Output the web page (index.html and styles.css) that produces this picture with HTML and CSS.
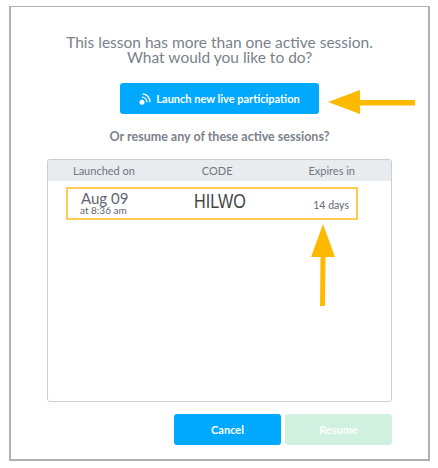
FILE: index.html
```html
<!DOCTYPE html>
<html lang="en">
<head>
    <meta charset="UTF-8">
    <title>Active sessions</title>
    <link rel="stylesheet" href="styles.css">
</head>
<body>
    <div class="dialog">
        <p class="intro">This lesson has more than one active session.<br>What would you like to do?</p>

        <button class="launch">
            <svg class="live-icon" viewBox="0 0 12 12" width="12" height="12">
                <circle cx="3" cy="9.200" r="2.500" fill="#fff"/>
                <path d="M3 4.200a5 5 0 0 1 5 5M3.600 .8a8 8 0 0 1 7.400 8.400" fill="none" stroke="#fff" stroke-width="1.300"/>
            </svg>
            Launch new live participation
        </button>

        <p class="resume-text">Or resume any of these active sessions?</p>

        <div class="sessions">
            <div class="sessions-head">
                <span>Launched on</span>
                <span class="code-head">CODE</span>
                <span>Expires in</span>
            </div>
            <div class="session-row">
                <div class="session-date">
                    <div class="day">Aug 09</div>
                    <div class="time">at 8:36 am</div>
                </div>
                <div class="session-code">HILWO</div>
                <div class="session-expires">14 days</div>
            </div>
        </div>

        <div class="actions">
            <button class="btn-cancel">Cancel</button>
            <button class="btn-resume">Resume</button>
        </div>

        <svg class="arrow arrow-left" viewBox="0 0 90 26" width="90" height="26">
            <path d="M1 12L33 0V10H88V15.500H33V24Z" fill="#ffb900"/>
        </svg>
        <svg class="arrow arrow-up" viewBox="0 0 26 84" width="26" height="84">
            <path d="M13 0L25 33H15.500L15 82H10L10.500 33H1Z" fill="#ffb900"/>
        </svg>
    </div>
</body>
</html>
```

FILE: styles.css
```css
body{
    margin: 0;
    background-color: #fff;
    font-family: "Lato", sans-serif;
}

.dialog{
    position: relative;
    box-sizing: border-box;
    width: 421px;
    height: 455px;
    margin: 6px 0 0 9px;
    padding: 28px 36px 0 36px;
    border: 1px solid #b0b0b0;
    border-width: 1px 2px 2px 2px;
    display: flex;
    flex-direction: column;
    align-items: center;
}

.intro{
    margin: 0;
    font-size: 15.500px;
    line-height: 15px;
    text-align: center;
    color: #7a818b;
    white-space: nowrap;
}

.launch{
    width: 199px;
    height: 31px;
    margin-top: 18px;
    border: none;
    border-radius: 3px;
    background-color: #00a9ff;
    color: #fff;
    font-family: inherit;
    font-size: 11px;
    font-weight: bold;
    display: flex;
    align-items: center;
    justify-content: center;
    gap: 5px;
}

.resume-text{
    margin: 15px 0 0 0;
    font-size: 12.500px;
    font-weight: bold;
    line-height: 16px;
    color: #7a818b;
}

.sessions{
    box-sizing: border-box;
    width: 345px;
    height: 243px;
    margin-top: 14px;
    border: 1px solid #c8ced4;
    border-radius: 3px;
}

.sessions-head{
    height: 21px;
    padding: 0 36px 0 25px;
    background-color: #e9ecef;
    display: flex;
    align-items: center;
    justify-content: space-between;
    font-size: 11px;
    color: #6f7680;
}

.code-head{
    margin-right: 9px;
}

.session-row{
    box-sizing: border-box;
    width: 292px;
    height: 33px;
    margin: 6px 0 0 18px;
    padding: 0 7px 0 12px;
    border: 2px solid #ffcb52;
    display: flex;
    align-items: center;
    color: #5f666f;
}

.session-date{
    width: 70px;
}

.day{
    font-size: 15px;
    line-height: 13px;
    margin-left: 1px;
}

.time{
    font-size: 10px;
    line-height: 10px;
}

.session-code{
    width: 80px;
    margin: -6px 0 0 44px;
    font-family: "Liberation Sans", sans-serif;
    font-size: 21px;
    color: #444;
    transform: scaleX(0.770);
    transform-origin: left center;
}

.session-expires{
    margin: 2px 0 0 auto;
    font-size: 10.500px;
}

.actions{
    align-self: flex-end;
    display: flex;
    gap: 4px;
    margin-top: 12px;
}

.actions button{
    width: 107px;
    height: 31px;
    border: none;
    border-radius: 3px;
    font-family: inherit;
    font-size: 11px;
    font-weight: bold;
    color: #fff;
}

.btn-cancel{
    background-color: #00a9ff;
}

.btn-resume{
    background-color: #d0f0e0;
}

.arrow{
    position: absolute;
}

.arrow-left{
    left: 316px;
    top: 83px;
}

.arrow-up{
    left: 299px;
    top: 217px;
}
```
